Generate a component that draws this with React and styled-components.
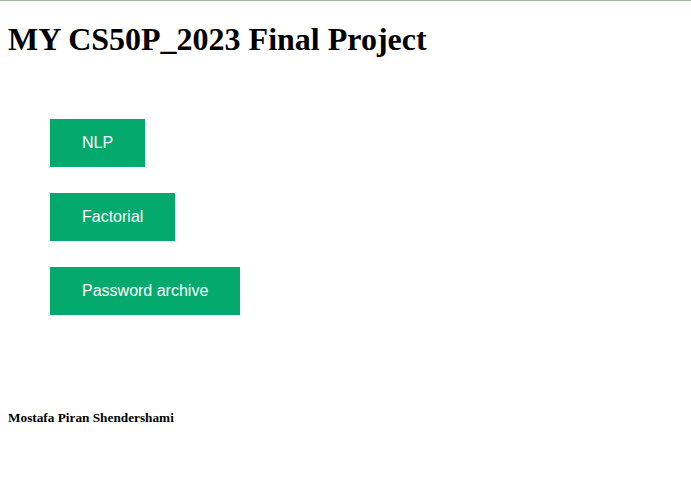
import React from "react";
import styled, { createGlobalStyle } from "styled-components";

const Global = createGlobalStyle`
  html, body { margin: 0; padding: 0; background: #fff; }
  body { font-family: "Liberation Serif", "Times New Roman", serif; color: #000; }
`;

const Page = styled.div`
  display: flex;
  flex-direction: column;
  padding: 0 8px;
  border-top: 1px solid #9fb89f;
`;

const Title = styled.h1`
  margin: 20.44px 0 0;
  font-size: 32px;
  line-height: 37px;
  font-weight: bold;
`;

const Menu = styled.nav`
  display: flex;
  flex-direction: column;
  align-items: flex-start;
  gap: 26px;
  margin-top: 60.5px;
  padding-left: 42px;
`;

const Button = styled.a`
  display: block;
  background: #04aa6d;
  color: #fff;
  font-family: "Liberation Sans", Arial, sans-serif;
  font-size: 16px;
  line-height: 48px;
  height: 48px;
  padding: 0 32px;
  text-decoration: none;
  cursor: pointer;
`;

const Footer = styled.h5`
  margin: 95px 0 0;
  font-size: 13.28px;
  line-height: 15px;
  font-weight: bold;
`;

export default function App() {
  return (
    <>
      <Global />
      <Page>
        <Title>MY CS50P_2023 Final Project</Title>
        <Menu>
          <Button>NLP</Button>
          <Button>Factorial</Button>
          <Button>Password archive</Button>
        </Menu>
        <Footer>Mostafa Piran Shendershami</Footer>
      </Page>
    </>
  );
}
